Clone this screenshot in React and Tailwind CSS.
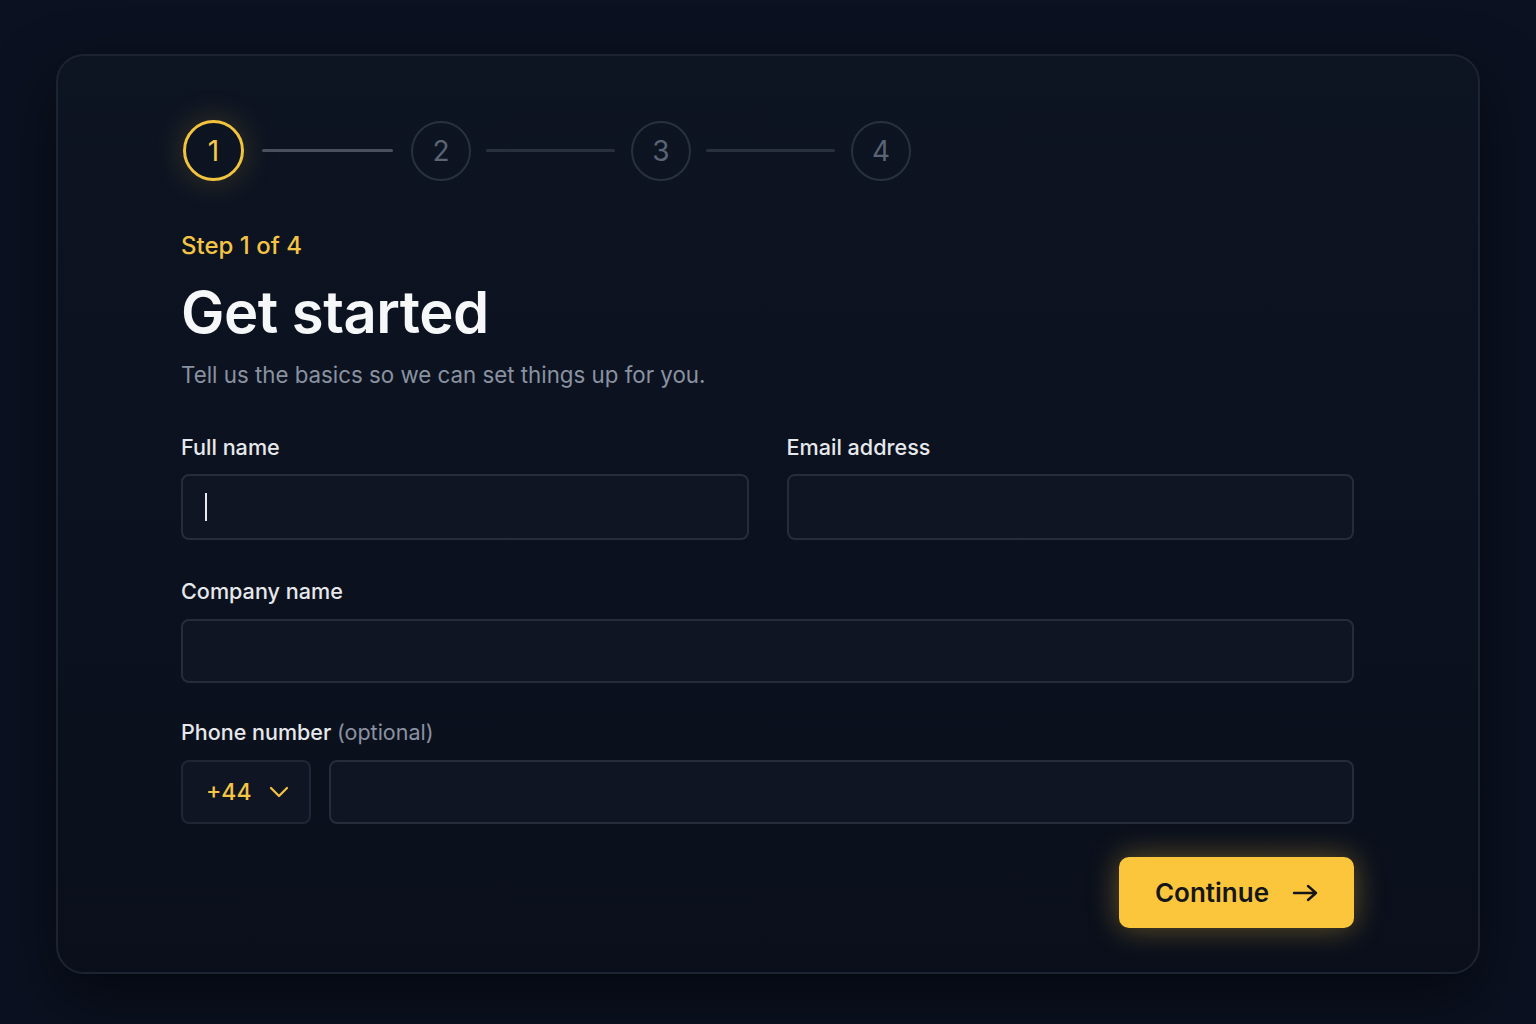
const font = { fontFamily: 'Inter, "Noto Sans", sans-serif' };

// Numbered progress indicator across the top of the card
function Stepper({ current, total }) {
  const steps = Array.from({ length: total }, (_, i) => i + 1);
  return (
    <div className="flex items-center">
      {steps.map((n, i) => (
        <div key={n} className="flex items-center">
          {n === current ? (
            <div className="w-[61px] h-[61px] rounded-full border-[3px] border-[#f2c33f] flex items-center justify-center text-[28px] text-[#f5c94a] shadow-[0_0_34px_rgba(242,195,63,0.2)]">
              {n}
            </div>
          ) : (
            <div className="w-[60px] h-[60px] rounded-full border-2 border-[#283141] flex items-center justify-center text-[28px] text-[#5a6475]">
              {n}
            </div>
          )}
          {i < steps.length - 1 &&
            (n === current ? (
              <div className="ml-[18px] mr-[18px] w-[131px] h-[3px] rounded-full bg-[#4a505c]" />
            ) : (
              <div className="ml-[15px] mr-[16px] w-[129px] h-[3px] rounded-full bg-[#283040]" />
            ))}
        </div>
      ))}
    </div>
  );
}

function Label({ children }) {
  return <div className="text-[21.6px] leading-[28px] text-[#e6e8ec] font-medium">{children}</div>;
}

function Field({ className = '', caret = false }) {
  return (
    <div
      className={
        'rounded-[8px] border-2 border-[#252d3b] bg-[#0f1523] flex items-center px-[22px] ' + className
      }
    >
      {caret && <div className="w-[2px] h-[28px] bg-[#e8eaee]" />}
    </div>
  );
}

export default function App() {
  return (
    <div className="min-h-screen w-full bg-[#0b1120] flex justify-center pt-[54px]" style={font}>
      <div className="w-[1424px] h-[920px] rounded-[28px] border-2 border-[#1c2331] bg-gradient-to-b from-[#0d1422] to-[#0a0f1b] shadow-[0_24px_60px_rgba(0,0,0,0.5)] pl-[123px] pr-[124px] pt-[64px]">
        <div className="pl-[2px]">
          <Stepper current={1} total={4} />
        </div>

        <div className="mt-[50px] text-[24px] leading-[30px] text-[#f3c445] font-medium">Step 1 of 4</div>
        <h1 className="mt-[15px] text-[58px] leading-[72px] font-semibold text-[#f6f7f9] tracking-[-0.5px]">
          Get started
        </h1>
        <p className="mt-[12px] text-[22.3px] leading-[30px] text-[#8a92a1]">
          Tell us the basics so we can set things up for you.
        </p>

        <div className="mt-[43px] grid grid-cols-2 gap-x-[38px]">
          <div>
            <Label>Full name</Label>
            <Field className="mt-[13px] h-[66px]" caret />
          </div>
          <div>
            <Label>Email address</Label>
            <Field className="mt-[13px] h-[66px]" />
          </div>
        </div>

        <div className="mt-[37px]">
          <Label>Company name</Label>
          <Field className="mt-[14px] h-[64px]" />
        </div>

        <div className="mt-[35px]">
          <div className="text-[21.5px] leading-[28px] text-[#e6e8ec] font-medium">
            Phone number <span className="text-[#8a92a1] font-normal">(optional)</span>
          </div>
          <div className="mt-[14px] flex gap-[18px]">
            <div className="w-[130px] h-[64px] rounded-[8px] border-2 border-[#1f2634] bg-[#0f1523] flex items-center pl-[23px] gap-[17px] text-[23px] text-[#f3c445] font-medium">
              +44
              <svg width="20" height="12" viewBox="0 0 20 12" fill="none" stroke="#f3c445" strokeWidth="2.2" strokeLinecap="round" strokeLinejoin="round">
                <path d="M2 2l8 8 8-8" />
              </svg>
            </div>
            <Field className="flex-1 h-[64px]" />
          </div>
        </div>

        <div className="mt-[33px] flex justify-end">
          <button className="w-[235px] h-[71px] rounded-[10px] bg-[#fbc53c] shadow-[0_0_30px_rgba(251,197,60,0.38)] flex items-center justify-center gap-[23px] text-[26px] font-semibold text-[#15161a]">
            Continue
            <svg width="26" height="18" viewBox="0 0 26 18" fill="none" stroke="#15161a" strokeWidth="2.4" strokeLinecap="round" strokeLinejoin="round">
              <path d="M2 9h22M16 2l8 7-8 7" />
            </svg>
          </button>
        </div>
      </div>
    </div>
  );
}
